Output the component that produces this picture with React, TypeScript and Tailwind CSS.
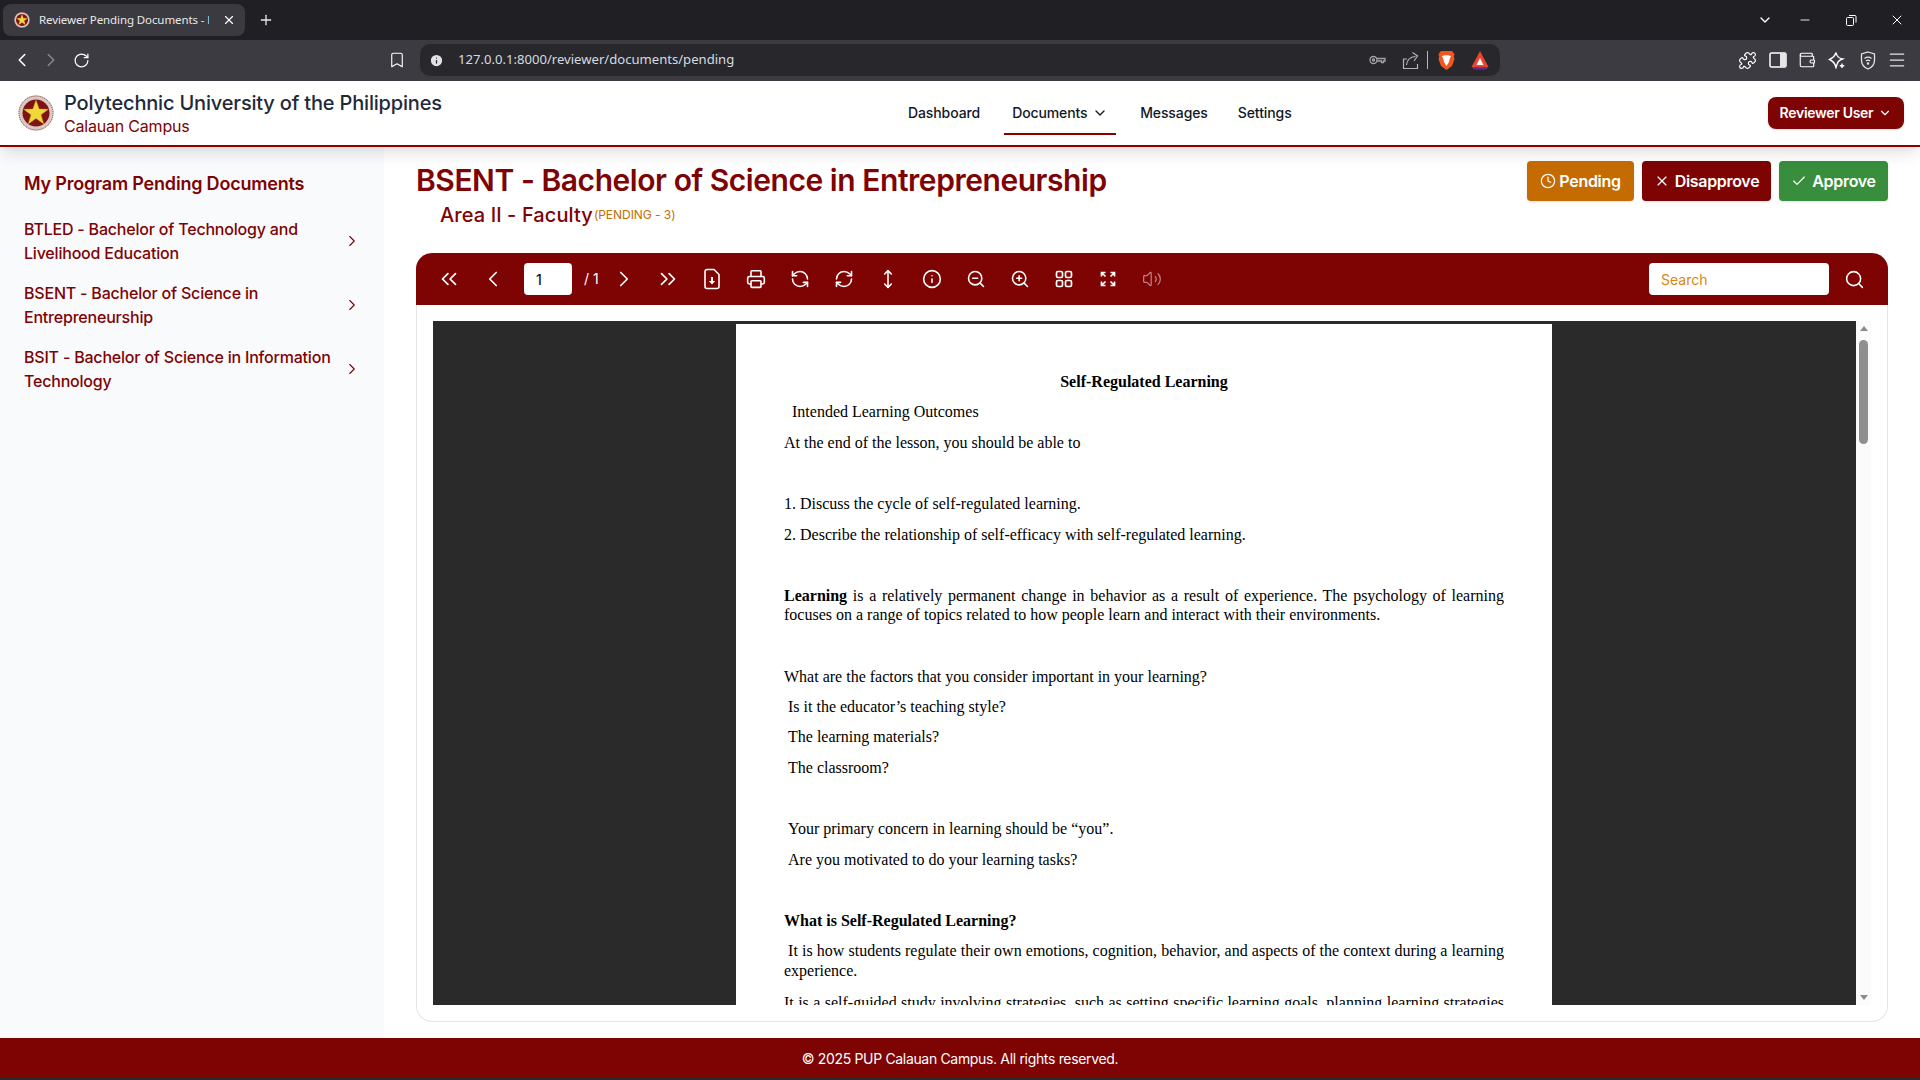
import {
  ChevronDown,
  ChevronLeft,
  ChevronRight,
  ChevronsLeft,
  ChevronsRight,
  Check,
  Clock,
  Info,
  Menu,
  Minus,
  MoveVertical,
  Plus,
  Printer,
  RefreshCcw,
  RefreshCw,
  RotateCw,
  Search,
  X,
  ZoomIn,
  ZoomOut,
  Bookmark,
  Puzzle,
  Wallet,
  Volume2,
} from "lucide-react";

const sans = "font-['Inter',sans-serif]";

function PupSeal({ size }: { size: number }) {
  return (
    <svg width={size} height={size} viewBox="0 0 36 36" className="shrink-0">
      <circle cx="18" cy="18" r="17.5" fill="#d9c9c4" />
      <circle cx="18" cy="18" r="17" fill="none" stroke="#8a3a3a" strokeWidth="1" strokeDasharray="1 1" />
      <circle cx="18" cy="18" r="13.5" fill="#7f1212" />
      <polygon
        points="18,5 21.2,14 30.5,14.2 23,19.8 25.8,29 18,23.5 10.2,29 13,19.8 5.5,14.2 14.8,14"
        fill="#f1d63c"
        stroke="#b89a1e"
        strokeWidth="0.4"
      />
    </svg>
  );
}

function BraveLion() {
  return (
    <svg width="17" height="20" viewBox="0 0 17 20">
      <path d="M3 1h11l2.5 3-.7 3 .7 2-2.5 7-5.500 4-5.500-4L.5 9l.7-2-.7-3z" fill="#f1561f" />
      <path d="M4 6l3-.8h3l3 .8-1.500 3.500L11 12l-2.500 4L6 12 5.500 9.500z" fill="#fff" />
    </svg>
  );
}

function RewardsTriangle() {
  return (
    <svg width="18" height="20" viewBox="0 0 18 20">
      <polygon points="9,1 17.500,17 .5,17" fill="#e8452c" />
      <polygon points="0.500,17 17.500,17 15,19.500 3,19.500" fill="#662d91" />
      <polygon points="9,8 12.500,15 5.500,15" fill="#fff" />
    </svg>
  );
}

function KeyIcon() {
  return (
    <svg width="17" height="12" viewBox="0 0 17 12" fill="none" stroke="#a2a2a8" strokeWidth="1.300">
      <circle cx="4.500" cy="6" r="3.500" />
      <circle cx="4.500" cy="6" r="1" />
      <path d="M8 4.500h8v2.500h-1.500v1.500h-2V7H8" />
    </svg>
  );
}

function ShareIcon() {
  return (
    <svg width="18" height="19" viewBox="0 0 18 19" fill="none" stroke="#b3b3b8" strokeWidth="1.200">
      <path d="M5 8H1.500v9.500h14V13" />
      <path d="M4.500 14c.5-5 3.500-8 9-8.500M10.500 1.500l5 3.500-3.500 5" />
    </svg>
  );
}

function LeoStar() {
  return (
    <svg width="18" height="18" viewBox="0 0 18 18" fill="none" stroke="#fff" strokeWidth="1.400">
      <path d="M8 1.500c.6 3.500 2 5.500 6.500 6.500-3 1-4.500 2-5.200 4.500L8 16.500C7 12 5 10 1.500 8.500 5 7 7 5 8 1.500z" />
      <path d="M14 12.500v4.500M11.800 14.800h4.500" />
    </svg>
  );
}

function VpnShield() {
  return (
    <svg width="16" height="19" viewBox="0 0 16 19" fill="none" stroke="#e5e5e5" strokeWidth="1.300">
      <path d="M8 1l6.500 2v6.500c0 4-3 7-6.500 8.500-3.500-1.500-6.500-4.500-6.500-8.500V3z" />
      <path d="M4.500 7.500c2-1.500 5-1.500 7 0M6 10c1-.8 3-.8 4 0" />
      <circle cx="8" cy="12.500" r=".6" fill="#e5e5e5" />
    </svg>
  );
}

function BrowserChrome() {
  return (
    <div className="shrink-0 font-['Noto_Sans',sans-serif]">
      <div className="h-10 bg-[#202024] flex items-center pl-[3px]">
        <div className="w-[242px] h-8 rounded-lg bg-[#3a3a40] flex items-center pl-[11px] pr-2">
          <PupSeal size={16} />
          <span className="ml-[9px] w-[170px] overflow-hidden whitespace-nowrap text-[11.500px] tracking-[-0.1px] text-[#e8e8ea]">
            Reviewer Pending Documents - PUP
          </span>
          <X size={14} className="ml-[13px] text-white" />
        </div>
        <Plus size={16} className="ml-[13px] text-[#e8e8ea]" />
        <div className="flex-1" />
        <ChevronDown size={16} className="text-white" />
        <Minus size={14} strokeWidth={1.5} className="ml-[25px] text-white" />
        <svg width="12" height="12" viewBox="0 0 12 12" className="ml-[33px] text-white" fill="none" stroke="currentColor">
          <rect x="1.500" y="3.500" width="7" height="8" rx="1" />
          <path d="M4 1.500h6a1 1 0 0 1 1 1v6" />
        </svg>
        <X size={16} strokeWidth={1.5} className="ml-[32px] mr-[15px] text-white" />
      </div>
      <div className="h-[41px] bg-[#3b3b41] flex items-center pl-[11px] pb-px">
        <ChevronLeft size={22} strokeWidth={1.75} className="text-white" />
        <ChevronRight size={22} strokeWidth={1.75} className="ml-[7px] text-[#85858b]" />
        <RotateCw size={17} strokeWidth={1.75} className="ml-[11px] text-white" />
        <Bookmark size={18} strokeWidth={1.5} className="ml-[298px] text-white" />
        <div className="ml-[14px] w-[1080px] h-8 rounded-[10px] bg-[#28282c] flex items-center pl-[9px]">
          <Info size={15} fill="#e3e3e6" className="text-[#28282c]" />
          <span className="ml-[14px] text-[13.100px] text-[#d4dae2]">127.0.0.1:8000/reviewer/documents/pending</span>
          <div className="flex-1" />
          <KeyIcon />
          <div className="ml-[16px] flex">
            <ShareIcon />
          </div>
          <div className="ml-[7px] w-px h-[18px] bg-[#b8b8bc]" />
          <div className="ml-[10px] flex">
            <BraveLion />
          </div>
          <div className="ml-[16px] mr-[11px] flex">
            <RewardsTriangle />
          </div>
        </div>
        <Puzzle size={19} strokeWidth={1.5} className="ml-[238px] text-white" />
        <svg width="18" height="18" viewBox="0 0 18 18" className="ml-[12px]">
          <rect x="1" y="2" width="16" height="14" rx="1.500" fill="none" stroke="#fff" strokeWidth="1.500" />
          <rect x="11" y="2" width="6" height="14" fill="#e5e5e5" />
        </svg>
        <Wallet size={18} strokeWidth={1.5} className="ml-[11px] text-white" />
        <div className="ml-[12px] flex">
          <LeoStar />
        </div>
        <div className="ml-[14px] flex">
          <VpnShield />
        </div>
        <Menu size={20} strokeWidth={1.5} className="ml-[11px] text-[#e5e5e5]" />
      </div>
    </div>
  );
}

function SiteHeader() {
  return (
    <header className="relative z-10 shrink-0 h-[66px] bg-white border-b-2 border-[#8b0000] shadow-lg flex items-center pl-[18px] pr-4">
      <PupSeal size={36} />
      <div className="ml-[10px] w-[436px]">
        <div className="text-xl leading-[26px] font-medium tracking-[-0.18px] text-[#1f2937]">
          Polytechnic University of the Philippines
        </div>
        <div className="text-base leading-[20px] tracking-[-0.2px] text-[#7e0303]">Calauan Campus</div>
      </div>
      <nav className="ml-[400px] flex items-center text-sm text-[#111827] font-medium tracking-[-0.1px]">
        <a className="mx-2 px-0 py-[10px]">Dashboard</a>
        <a className="ml-[16px] px-2 py-[10px] flex items-center gap-1 border-b-2 border-[#8b0000] mt-[2px] w-[112px]">
          Documents <ChevronDown size={16} />
        </a>
        <a className="ml-[24px] py-[10px]">Messages</a>
        <a className="ml-[30px] py-[10px]">Settings</a>
      </nav>
      <div className="flex-1" />
      <button className="h-8 w-[136px] rounded-lg bg-[#7e0303] text-white text-sm font-semibold tracking-[-0.3px] shadow-sm flex items-center justify-center gap-[5px]">
        Reviewer User <ChevronDown size={14} />
      </button>
    </header>
  );
}

const programs = [
  "BTLED - Bachelor of Technology and Livelihood Education",
  "BSENT - Bachelor of Science in Entrepreneurship",
  "BSIT - Bachelor of Science in Information Technology",
];

function Sidebar() {
  return (
    <aside className="w-96 shrink-0 bg-[#f9fafc] pl-6 pr-[23px] pt-[23px] text-[#7e0303]">
      <h2 className="text-lg leading-7 font-semibold tracking-[-0.2px]">My Program Pending Documents</h2>
      <ul className="mt-[19px] flex flex-col gap-4">
        {programs.map((p) => (
          <li key={p} className="flex items-center justify-between">
            <span className="w-[316px] text-base leading-6 font-medium tracking-[-0.2px]">{p}</span>
            <ChevronRight size={18} strokeWidth={1.5} />
          </li>
        ))}
      </ul>
    </aside>
  );
}

const toolbarIcons = [Printer, RefreshCcw, RefreshCw, MoveVertical, Info, ZoomOut, ZoomIn];

function DocDownload() {
  return (
    <svg width="20" height="22" viewBox="0 0 20 22" fill="none" stroke="currentColor" strokeWidth="1.600">
      <path d="M5 1.500h7l5 5v12a2 2 0 0 1-2 2H5a2 2 0 0 1-2-2v-15a2 2 0 0 1 2-2z" />
      <path d="M10 9v6" strokeWidth="2" />
      <path d="M6.800 13h6.400L10 16.500z" fill="currentColor" stroke="none" />
    </svg>
  );
}

function Grid4() {
  return (
    <svg width="18" height="18" viewBox="0 0 18 18" fill="none" stroke="currentColor" strokeWidth="1.700">
      <rect x="1.500" y="1.500" width="6" height="6" rx="1.500" />
      <rect x="10.500" y="1.500" width="6" height="6" rx="1.500" />
      <rect x="1.500" y="10.500" width="6" height="6" rx="1.500" />
      <rect x="10.500" y="10.500" width="6" height="6" rx="1.500" />
    </svg>
  );
}

function ExpandArrows() {
  return (
    <svg width="18" height="18" viewBox="0 0 18 18" fill="none" stroke="currentColor" strokeWidth="1.700">
      <path d="M2.500 6.500v-4h4M2.500 2.500l4 4M15.500 6.500v-4h-4M15.500 2.500l-4 4M2.500 11.500v4h4M2.500 15.500l4-4M15.500 11.500v4h-4M15.500 15.500l-4-4" />
    </svg>
  );
}

function PdfToolbar() {
  const btn = "w-11 flex justify-center";
  return (
    <div className="-mx-px h-[52px] rounded-t-2xl bg-[#7e0303] flex items-center pl-[11px] pr-[23px] text-white">
      <span className={btn}><ChevronsLeft size={26} strokeWidth={1.6} /></span>
      <span className={btn}><ChevronLeft size={26} strokeWidth={1.6} /></span>
      <input
        readOnly
        value="1"
        className="ml-[9px] w-12 h-8 rounded bg-white text-[#111827] text-sm font-medium px-3 outline-none"
      />
      <span className="ml-3 text-sm w-[18px]">/ 1</span>
      <span className="w-11 flex justify-center"><ChevronRight size={26} strokeWidth={1.6} /></span>
      <span className={btn}><ChevronsRight size={26} strokeWidth={1.6} /></span>
      <span className={btn}><DocDownload /></span>
      {toolbarIcons.map((Icon, i) => (
        <span key={i} className={btn}><Icon size={20} strokeWidth={1.9} /></span>
      ))}
      <span className={btn}><Grid4 /></span>
      <span className={btn}><ExpandArrows /></span>
      <span className={btn + " opacity-50"}><Volume2 size={20} strokeWidth={1.5} /></span>
      <div className="flex-1" />
      <input
        readOnly
        placeholder="Search"
        className="w-[180px] h-8 rounded bg-white px-3 text-sm outline-none placeholder:text-[#d9860f]"
      />
      <Search size={21} strokeWidth={1.75} className="ml-[15px]" />
    </div>
  );
}

function PdfPage() {
  return (
    <div className="mt-[3px] w-[816px] h-[900px] shrink-0 bg-white px-12 text-black text-base leading-[19px] font-['Liberation_Serif',serif]">
      <p className="pt-[48px] text-center font-bold">Self-Regulated Learning</p>
      <p className="mt-[11px] pl-2">Intended Learning Outcomes</p>
      <p className="mt-3">At the end of the lesson, you should be able to</p>
      <p className="mt-[42px]">1. Discuss the cycle of self-regulated learning.</p>
      <p className="mt-3">2. Describe the relationship of self-efficacy with self-regulated learning.</p>
      <p className="mt-[42px] text-justify">
        <b>Learning</b> is a relatively permanent change in behavior as a result of experience. The psychology of
        learning focuses on a range of topics related to how people learn and interact with their environments.
      </p>
      <p className="mt-[43px]">What are the factors that you consider important in your learning?</p>
      <p className="mt-[11px] pl-1">Is it the educator’s teaching style?</p>
      <p className="mt-[11px] pl-1">The learning materials?</p>
      <p className="mt-3 pl-1">The classroom?</p>
      <p className="mt-[42px] pl-1">Your primary concern in learning should be “you”.</p>
      <p className="mt-3 pl-1">Are you motivated to do your learning tasks?</p>
      <p className="mt-[42px] font-bold">What is Self-Regulated Learning?</p>
      <p className="mt-[11px] leading-[20px] text-justify">
        &nbsp;It is how students regulate their own emotions, cognition, behavior, and aspects of the context during a
        learning experience.
      </p>
      <p className="mt-3 text-justify">
        It is a self-guided study involving strategies, such as setting specific learning goals, planning learning
        strategies and monitoring progress.
      </p>
    </div>
  );
}

function Scrollbar() {
  return (
    <div className="w-[15px] shrink-0 bg-[#fbfbfb] flex flex-col items-center pt-[5px] pb-[5px]">
      <div className="w-0 h-0 border-x-[4px] border-x-transparent border-b-[5px] border-b-[#8a8a8a]" />
      <div className="mt-[9px] w-[9px] h-[104px] rounded-full bg-[#8f8f8f]" />
      <div className="flex-1" />
      <div className="w-0 h-0 border-x-[4px] border-x-transparent border-t-[5px] border-t-[#8a8a8a]" />
    </div>
  );
}

function MainPanel() {
  return (
    <main className="flex-1 min-w-0 pl-8 pr-8 flex flex-col">
      <div className="flex justify-between pt-[14px]">
        <div>
          <h1 className="text-[30px] leading-[38px] font-semibold tracking-[-0.45px] text-[#7e0303]">
            BSENT - Bachelor of Science in Entrepreneurship
          </h1>
          <h2 className="mt-[2px] pl-6 flex items-center text-xl leading-7 font-medium text-[#7e0303] tracking-[0.1px]">
            Area Ⅱ - Faculty
            <span className="ml-px text-xs font-normal text-[#c46c02] tracking-[-0.05px] -mt-px">(PENDING - 3)</span>
          </h2>
        </div>
        <div className="flex gap-2 text-white text-base font-semibold tracking-[-0.3px]">
          <button className="h-10 w-[107px] rounded bg-[#c46c02] shadow-sm flex items-center justify-center gap-[3px]">
            <Clock size={16} strokeWidth={1.75} /> Pending
          </button>
          <button className="h-10 w-[129px] rounded bg-[#7e0303] shadow-sm flex items-center justify-center gap-[5px]">
            <X size={16} strokeWidth={1.75} /> Disapprove
          </button>
          <button className="h-10 w-[109px] rounded bg-[#388e3c] shadow-sm flex items-center justify-center gap-[5px]">
            <Check size={16} strokeWidth={1.75} /> Approve
          </button>
        </div>
      </div>
      <section className="mt-[24px] h-[769px] rounded-2xl border border-[#e5e5e5] border-t-0 flex flex-col">
        <PdfToolbar />
        <div className="mt-4 mx-4 mb-4 flex-1 min-h-0 flex overflow-hidden">
          <div className="flex-1 min-w-0 bg-[#2a2a2a] pr-px flex justify-center overflow-hidden">
            <PdfPage />
          </div>
          <Scrollbar />
        </div>
      </section>
    </main>
  );
}

export default function App() {
  return (
    <div className={`h-screen flex flex-col overflow-hidden bg-white ${sans}`}>
      <BrowserChrome />
      <SiteHeader />
      <div className="flex-1 min-h-0 flex">
        <Sidebar />
        <MainPanel />
      </div>
      <footer className="shrink-0 h-[39px] pt-[2px] bg-[#7e0303] text-white text-sm flex items-center justify-center tracking-[-0.33px]">
        © 2025 PUP Calauan Campus. All rights reserved.
      </footer>
      <div className="shrink-0 h-[3px] bg-[#2a2a2e]" />
    </div>
  );
}
